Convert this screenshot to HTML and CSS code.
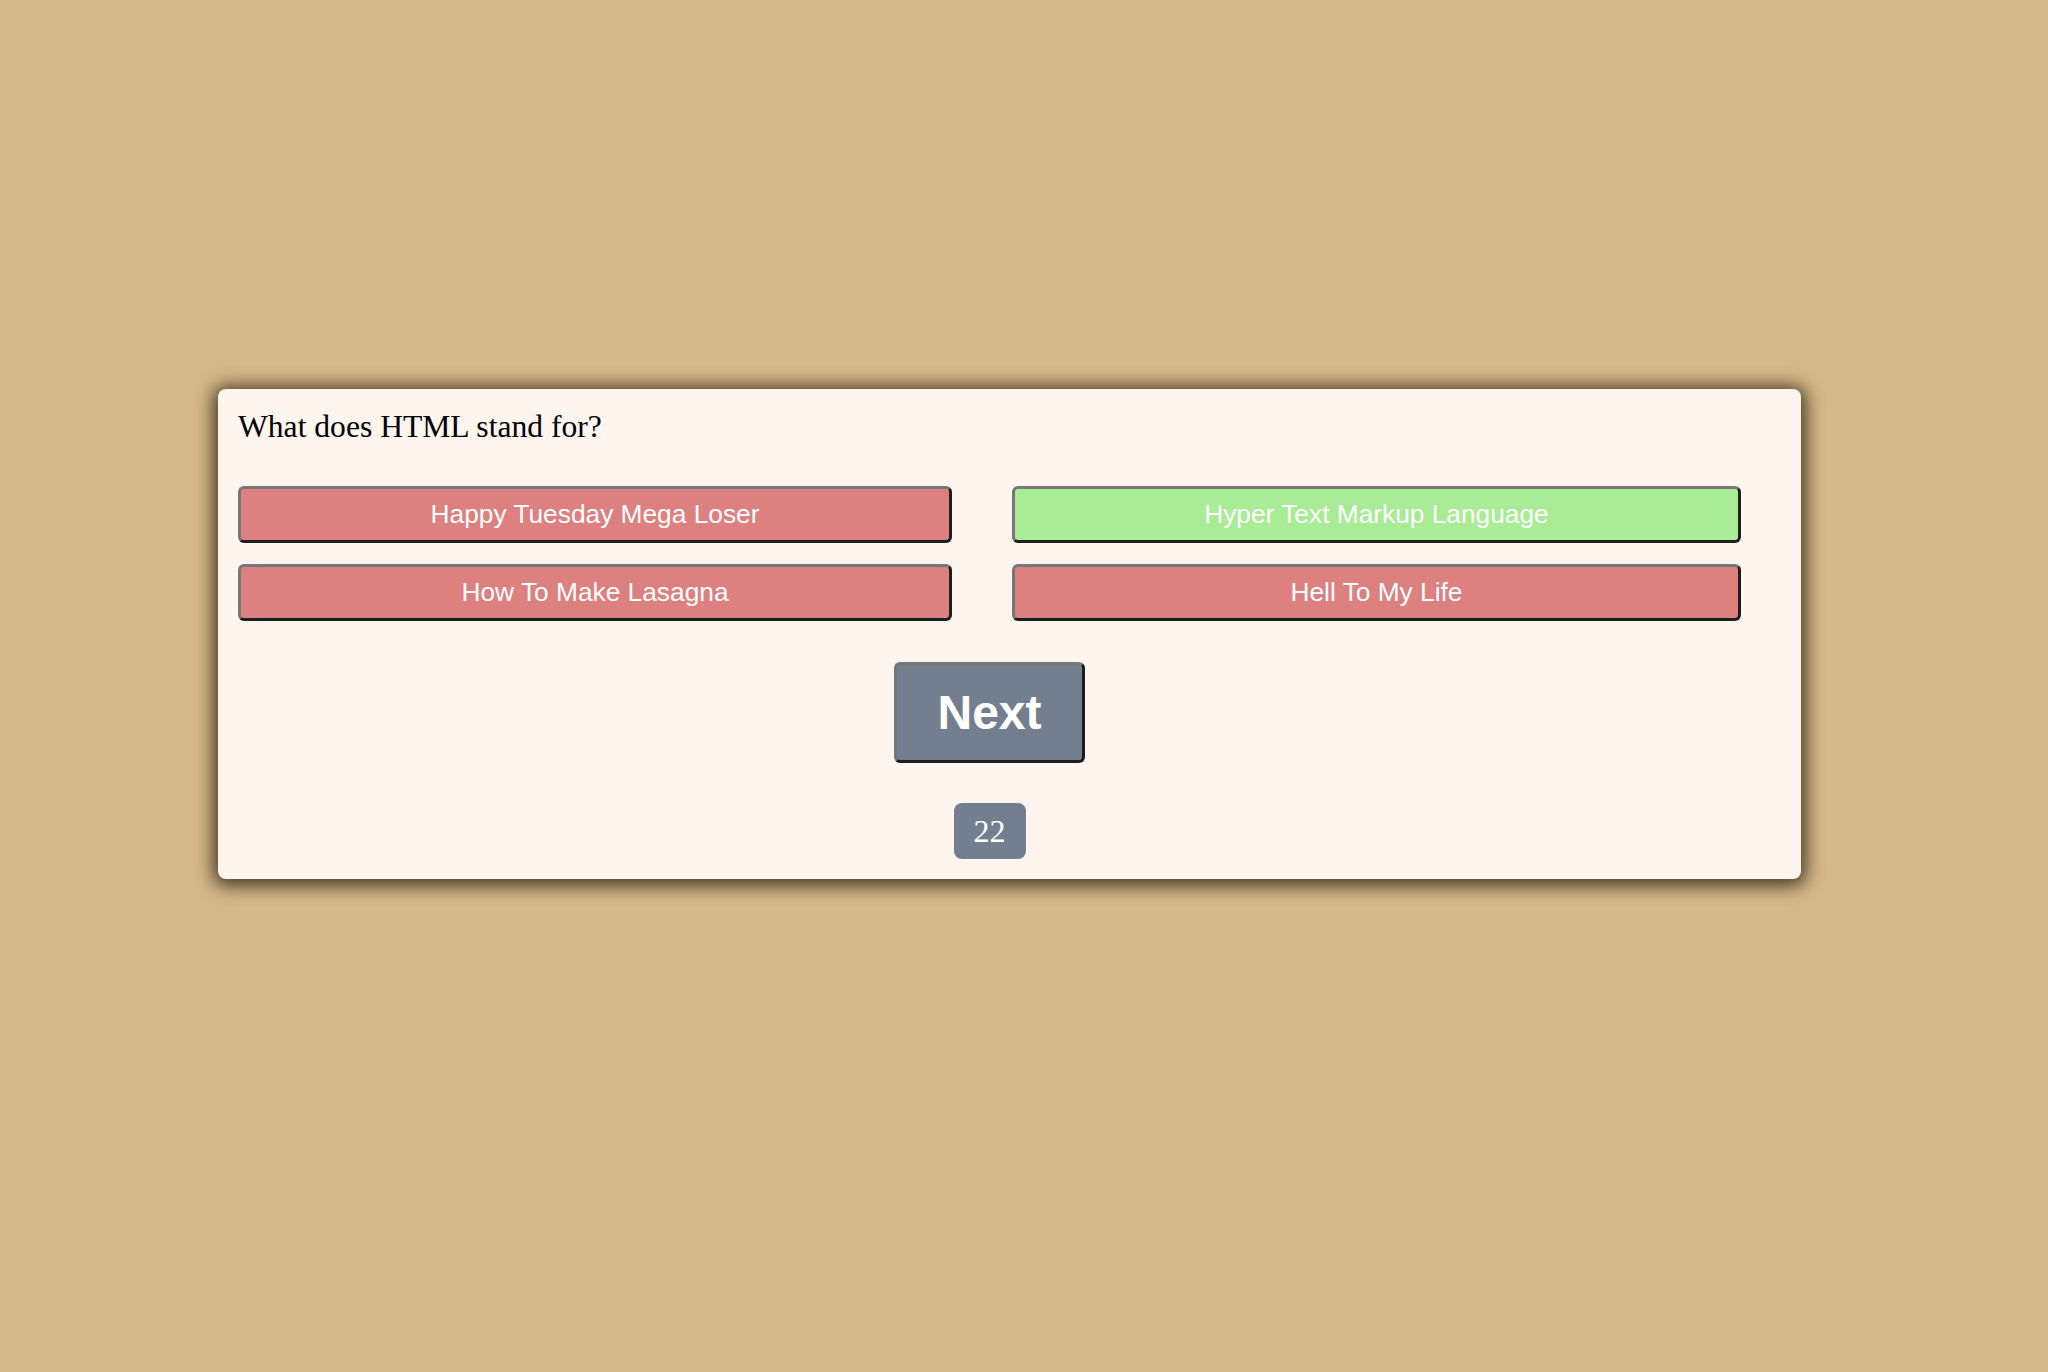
FILE: index.html
```html
<!DOCTYPE html>
<html>
<head>
<meta charset="utf-8">
<title>Quiz</title>
<link rel="stylesheet" href="styles.css">
</head>
<body>
<main class="page">
  <section class="card">
    <div class="question">What does HTML stand for?</div>
    <div class="answers">
      <button class="answer wrong">Happy Tuesday Mega Loser</button>
      <button class="answer right">Hyper Text Markup Language</button>
      <button class="answer wrong">How To Make Lasagna</button>
      <button class="answer wrong">Hell To My Life</button>
    </div>
    <div class="controls">
      <button class="next">Next</button>
      <div class="score">22</div>
    </div>
  </section>
</main>
</body>
</html>
```
FILE: styles.css
```css
html, body {
  margin: 0;
  padding: 0;
  background: #d6b98a;
}
body {
  width: 2048px;
  height: 1372px;
  overflow: hidden;
}
.page {
  padding: 389px 0 0 218px;
}
.card {
  width: 1583px;
  box-sizing: border-box;
  padding: 20px 60px 20px 20px;
  background: #fef5ef;
  border-radius: 8px;
  box-shadow: 0 2px 18px 5px rgba(45, 34, 18, 0.85);
}
.question {
  font-family: "Liberation Serif", "Times New Roman", serif;
  font-size: 31.6px;
  line-height: 36px;
  color: #000;
  margin-bottom: 41px;
}
.answers {
  display: grid;
  grid-template-columns: 714px 729px;
  column-gap: 60px;
  row-gap: 21px;
}
.answer {
  font-family: "Liberation Sans", Arial, sans-serif;
  font-size: 26.3px;
  line-height: 31px;
  color: #fff;
  padding: 10px 0;
  border: 3px solid;
  border-color: #777 #1e1e1e #1e1e1e #777;
  border-radius: 6px;
  text-align: center;
  cursor: pointer;
}
.wrong {
  background: #dc8080;
}
.right {
  background: #a8ec96;
}
.controls {
  display: flex;
  flex-direction: column;
  align-items: center;
  gap: 40px;
  margin-top: 41px;
}
.next {
  font-family: "Liberation Sans", Arial, sans-serif;
  font-weight: bold;
  font-size: 48px;
  line-height: 55px;
  color: #fff;
  background: #737f8e;
  padding: 20px 40px;
  border: 3px solid;
  border-color: #777 #1c1c1c #1c1c1c #777;
  border-radius: 6px;
  cursor: pointer;
}
.score {
  font-family: "Liberation Serif", "Times New Roman", serif;
  font-size: 32px;
  line-height: 36px;
  color: #fff;
  background: #737f8e;
  padding: 10px 20px;
  border-radius: 8px;
}
```
